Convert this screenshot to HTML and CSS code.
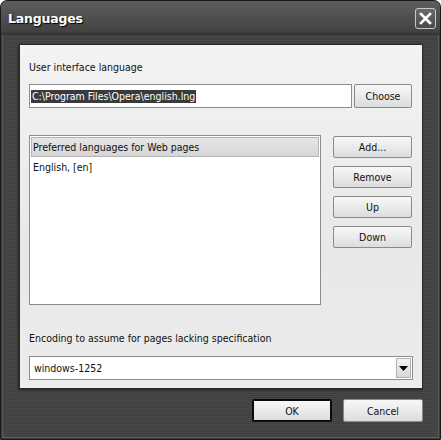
FILE: index.html
```html
<!DOCTYPE html>
<html>
<head>
<meta charset="utf-8">
<link rel="stylesheet" href="styles.css">
</head>
<body>
<div class="window">
  <div class="titlebar">
    <span class="title">Languages</span>
    <span class="close"><svg width="13" height="13" viewBox="0 0 13 13"><path d="M2 2 L11 11 M11 2 L2 11" stroke="#fff" stroke-width="2.6" stroke-linecap="square"/></svg></span>
  </div>
  <div class="panel">
    <div class="label">User interface language</div>
    <div class="row">
      <div class="field"><span class="sel">C:\Program Files\Opera\english.lng</span></div>
      <div class="btn choose">Choose</div>
    </div>
    <div class="listrow">
      <div class="list">
        <div class="listhead">Preferred languages for Web pages</div>
        <div class="item">English, [en]</div>
      </div>
      <div class="side">
        <div class="btn">Add...</div>
        <div class="btn">Remove</div>
        <div class="btn">Up</div>
        <div class="btn">Down</div>
      </div>
    </div>
    <div class="label enc">Encoding to assume for pages lacking specification</div>
    <div class="select">
      <span class="val">windows-1252</span>
      <span class="arrow"><svg width="9" height="5" viewBox="0 0 9 5"><path d="M0 0 H9 L4.5 5 Z" fill="#000"/></svg></span>
    </div>
  </div>
  <div class="footer">
    <div class="btn ok">OK</div>
    <div class="btn cancel">Cancel</div>
  </div>
</div>
</body>
</html>
```
FILE: styles.css
```css
html, body {
  margin: 0;
  padding: 0;
  background: #ffffff;
}
body {
  font-family: "DejaVu Sans Condensed", "Liberation Sans", Arial, sans-serif;
  font-size: 10.5px;
  color: #111;
}
.window {
  width: 441px;
  height: 440px;
  box-sizing: border-box;
  border: 1px solid #1a1a1a;
  border-radius: 7px 7px 0 0;
  box-shadow: inset 0 0 0 1px #3a3a3a, inset 0 0 0 2px #5c5c5c;
  background:
    repeating-linear-gradient(to bottom, #3f3f3f 0px, #3f3f3f 1px, #484848 1px, #484848 2px);
  display: flex;
  flex-direction: column;
  overflow: hidden;
}
.titlebar {
  height: 34px;
  flex: none;
  display: flex;
  align-items: center;
  justify-content: space-between;
  padding: 0 4px 2px 7px;
  background: linear-gradient(to bottom, #5e5e5e 0px, #4c4c4c 20px, #434343 30px, #333 34px);
  box-sizing: border-box;
}
.title {
  color: #fff;
  font-family: "DejaVu Sans", sans-serif;
  font-weight: bold;
  font-size: 12.5px;
  letter-spacing: -0.2px;
  text-shadow: 1px 1px 1px #000;
  margin-top: 2px;
}
.close {
  width: 21px;
  height: 21px;
  box-sizing: border-box;
  border: 1px solid #c8c8c8;
  border-radius: 3px;
  background: linear-gradient(to bottom, #6a6a6a, #4a4a4a);
  display: flex;
  align-items: center;
  justify-content: center;
  margin-top: 3px;
}
.panel {
  margin: 9px 17px 0 18px;
  height: 345px;
  box-sizing: border-box;
  border: 1px solid #2a2a2a;
  background: linear-gradient(to bottom, #f3f3f3, #e8e8e8 60%, #ececec);
  box-shadow: -1px 1px 2px rgba(0,0,0,0.5);
  padding: 15px 10px 0 9px;
  display: flex;
  flex-direction: column;
}
.label {
  line-height: 14px;
  height: 14px;
}
.row {
  display: flex;
  gap: 2px;
  margin-top: 10px;
  height: 24px;
}
.field {
  flex: 1;
  box-sizing: border-box;
  border: 1px solid #8c8c8c;
  background: #fff;
  display: flex;
  align-items: center;
  padding-left: 1px;
}
.sel {
  background: #3a3a3a;
  color: #fff;
  line-height: 13px;
  padding: 0 1px;
}
.btn {
  box-sizing: border-box;
  border: 1px solid #8a8a8a;
  border-radius: 2px;
  background: linear-gradient(to bottom, #f7f7f7 0%, #ececec 45%, #dcdcdc 100%);
  display: flex;
  align-items: center;
  justify-content: center;
  color: #111;
}
.choose {
  width: 58px;
}
.listrow {
  display: flex;
  gap: 12px;
  margin-top: 27px;
}
.list {
  width: 292px;
  height: 170px;
  box-sizing: border-box;
  border: 1px solid #8c8c8c;
  background: #fff;
  padding: 1px;
}
.listhead {
  height: 20px;
  box-sizing: border-box;
  border: 1px solid #b4b4b4;
  background: linear-gradient(to bottom, #e6e6e6, #d6d6d6);
  display: flex;
  align-items: center;
  padding-left: 1px;
}
.item {
  padding: 3px 0 0 2px;
  line-height: 14px;
}
.side {
  width: 79px;
  display: flex;
  flex-direction: column;
  gap: 8px;
  padding-top: 1px;
}
.side .btn {
  height: 22px;
}
.enc {
  margin-top: 26px;
}
.select {
  margin-top: 11px;
  height: 24px;
  width: 384px;
  box-sizing: border-box;
  border: 1px solid #8c8c8c;
  background: #fff;
  display: flex;
  align-items: center;
  justify-content: space-between;
  padding: 1px;
}
.val {
  padding-left: 3px;
}
.arrow {
  width: 15px;
  height: 20px;
  box-sizing: border-box;
  border: 1px solid #b0b0b0;
  background: linear-gradient(to bottom, #f4f4f4, #d8d8d8);
  display: flex;
  align-items: center;
  justify-content: center;
}
.footer {
  display: flex;
  justify-content: flex-end;
  gap: 11px;
  padding: 10px 17px 0 0;
}
.footer .btn {
  height: 23px;
}
.ok {
  width: 80px;
  border: 2px solid #0a0a0a;
}
.cancel {
  width: 80px;
}
```
